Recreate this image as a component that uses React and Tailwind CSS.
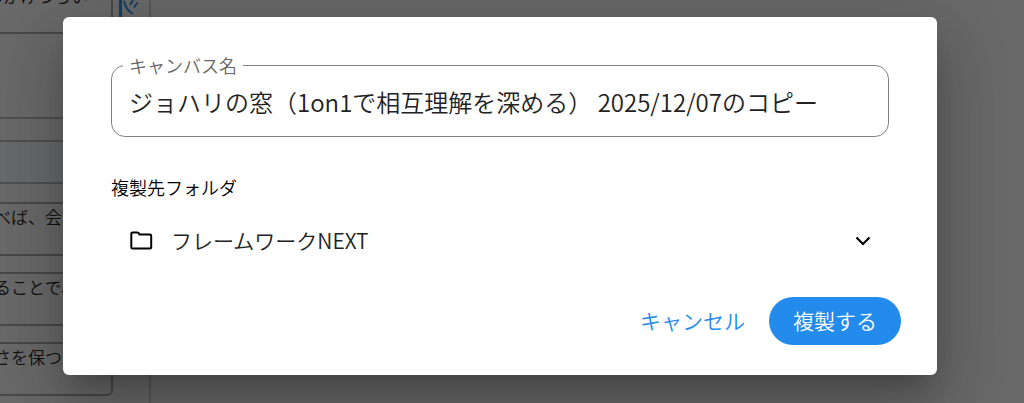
import React, { useState } from 'react';

// Cells of the canvas that sit behind the dialog
const notes = ['べば、会話', 'ることで、', 'さを保つ工'];

const CanvasBackground = () => (
  <div className="absolute inset-0 overflow-hidden bg-[#d2d2d2]" aria-hidden="true">
    <div className="h-full w-[151px] border-r-2 border-[#b0b0b0] text-[17px] leading-6 text-[#222222]">
      <div className="flex h-[34px] items-start">
        <div className="h-full w-[113px] border-r-2 border-b-2 border-[#909090] whitespace-nowrap">
          <p className="-mt-4 -ml-3.5">しかけづらい</p>
        </div>
        <div className="ml-1.5 h-full border-l-3 border-[#2c7ec8]">
          <svg className="h-5 w-5" viewBox="0 0 20 20" fill="none" stroke="#2c7ec8" strokeWidth="2">
            <path d="M2 1C3 6 6 11 11 14M8 5l3-5M12 7.500l3.500-5" />
          </svg>
        </div>
      </div>
      <div className="h-[85px] border-b-2 border-[#a0a0a0]" />
      <div className="h-[23px] border-b-2 border-[#a0a0a0]" />
      <div className="h-[42px] border-b-2 border-[#a0a0a0] bg-[#d0d3d7]" />
      <div className="mt-[18px] flex w-[113px] flex-col gap-4">
        {notes.map((note) => (
          <div key={note} className="h-[54px] rounded-r-md border-2 border-l-0 border-[#909090] whitespace-nowrap">
            <p className="-ml-1.5 pt-px">{note}</p>
          </div>
        ))}
      </div>
    </div>
  </div>
);

const FolderIcon = () => (
  <svg className="h-6 w-6" viewBox="0 0 24 24" fill="none" stroke="black" strokeWidth="2" strokeLinejoin="round" aria-hidden="true">
    <path d="M3.500 3.500h5q1 0 1.500 1l.5 1h10.500q1.200 0 1.200 1.200v11.600q0 1.200-1.200 1.200h-17.500q-1.200 0-1.200-1.200v-13.600q0-1.200 1.200-1.200z" />
  </svg>
);

const ChevronIcon = () => (
  <svg className="h-6 w-6" viewBox="0 0 24 24" fill="none" stroke="black" strokeWidth="2.2" aria-hidden="true">
    <path d="M5.500 8.500l6.500 6.500 6.500-6.500" />
  </svg>
);

const DuplicateDialog = () => {
  const [name, setName] = useState('ジョハリの窓（1on1で相互理解を深める） 2025/12/07のコピー');

  return (
    <form
      role="dialog"
      aria-label="キャンバスを複製"
      onSubmit={(e) => e.preventDefault()}
      className="relative mt-[17px] w-full max-w-[874px] rounded-md bg-white px-9 pt-9 pb-[30px] shadow-[0_17px_23px_-11px_rgba(0,0,0,0.2),0_36px_57px_5px_rgba(0,0,0,0.14),0_14px_69px_12px_rgba(0,0,0,0.12)]"
    >
      <div className="px-3">
        <fieldset className="rounded-[14px] border border-[#808080] px-[11px] pb-[11px]">
          <legend className="px-1.5 text-lg leading-6 text-[#666666]">
            <label htmlFor="canvas-name">キャンバス名</label>
          </legend>
          <input
            id="canvas-name"
            value={name}
            onChange={(e) => setName(e.target.value)}
            className="block h-12 w-full px-1.5 text-2xl text-[#222222] outline-none"
          />
        </fieldset>

        <p className="mt-9 text-lg leading-7 text-black">複製先フォルダ</p>
        <button type="button" className="mt-3 flex h-14 w-full items-center pr-3.5 pl-[18px]">
          <FolderIcon />
          <span className="ml-[18px] flex-1 text-left text-[21px] text-[#222222]">フレームワークNEXT</span>
          <ChevronIcon />
        </button>
      </div>

      <div className="mt-7 flex justify-end">
        <button type="button" className="h-12 px-6 text-[21px] text-[#228bec]">
          キャンセル
        </button>
        <button type="submit" className="h-12 rounded-full bg-[#228bec] px-6 text-[21px] text-white">
          複製する
        </button>
      </div>
    </form>
  );
};

const App = () => (
  <div className="relative flex min-h-screen items-start justify-center overflow-hidden pr-6 font-['Noto_Sans_CJK_JP',sans-serif] font-[350]">
    <CanvasBackground />
    <div className="absolute inset-0 bg-black/50" />
    <DuplicateDialog />
  </div>
);

export default App;
